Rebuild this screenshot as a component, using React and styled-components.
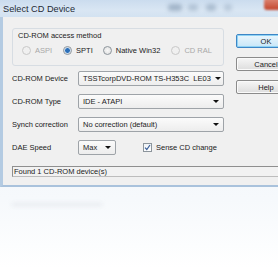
import styled, { createGlobalStyle } from "styled-components";

const GlobalStyle = createGlobalStyle`
  html, body {
    margin: 0;
    padding: 0;
    background: #ffffff;
  }
  body {
    font-family: "Liberation Sans", Arial, sans-serif;
  }
`;

const Screen = styled.div`
  width: 278px;
  height: 268px;
  overflow: hidden;
  position: relative;
  background: linear-gradient(#eaf1f7 0px, #f6f9fc 200px, #ffffff 268px);
`;

const Window = styled.div`
  width: 300px;
  display: flex;
  flex-direction: column;
`;

const TitleBar = styled.div`
  height: 17px;
  position: relative;
  background: linear-gradient(#cbdcee, #d9e6f3 60%, #d3e2f1);
  display: flex;
  align-items: center;
  padding-left: 3px;
  font-family: "Liberation Sans", Arial, sans-serif;
  font-size: 9.2px;
  color: #1e2a36;
`;

const Blob = styled.div`
  position: absolute;
  top: 4px;
  height: 7px;
  border-radius: 3px;
  filter: blur(2px);
  background: ${(p) => p.$color || "#7f95ad"};
  left: ${(p) => p.$left}px;
  width: ${(p) => p.$width}px;
  opacity: ${(p) => p.$opacity || 0.6};
`;

const CloseButton = styled.div`
  position: absolute;
  top: -2px;
  left: 264px;
  width: 30px;
  height: 12px;
  border-radius: 3px;
  background: linear-gradient(#e08a78, #c3452c);
  filter: blur(1px);
`;

const Body = styled.div`
  background: #f0f0f0;
  border-left: 3px solid #b4cbe2;
  border-bottom: 2px solid #a9c2dc;
  padding: 11px 0 0 9px;
  height: 157px;
  font-size: 7.5px;
  color: #1b1b1b;
`;

const Main = styled.div`
  display: flex;
  align-items: flex-start;
`;

const LeftColumn = styled.div`
  width: 212px;
  display: flex;
  flex-direction: column;
`;

const GroupBox = styled.div`
  height: 34px;
  border: 1px solid #d7dde3;
  border-radius: 3px;
  padding: 2px 0 0 5px;
  display: flex;
  flex-direction: column;
`;

const GroupLabel = styled.div`
  line-height: 9px;
`;

const RadioRow = styled.div`
  display: flex;
  align-items: center;
  margin-top: 6px;
  padding-left: 4px;
`;

const RadioItem = styled.label`
  display: flex;
  align-items: center;
  gap: 4px;
  margin-right: ${(p) => p.$gap}px;
  color: ${(p) => (p.$disabled ? "#a8a8a8" : "#1b1b1b")};
`;

const RadioDot = styled.span`
  width: 7px;
  height: 7px;
  border-radius: 50%;
  border: 1px solid ${(p) => (p.$disabled ? "#c8c8c8" : "#8d959c")};
  background: ${(p) =>
    p.$checked
      ? "radial-gradient(circle, #2c6fb8 0 2px, #9dc1e6 2.5px, #f4f4f4 3.5px)"
      : p.$disabled
      ? "#f0f0f0"
      : "radial-gradient(circle, #f8f8f8, #dcdcdc)"};
`;

const Rows = styled.div`
  display: flex;
  flex-direction: column;
  gap: 6px;
  margin-top: 4px;
`;

const Row = styled.div`
  display: flex;
  align-items: center;
  height: 17px;
`;

const Label = styled.div`
  width: 66px;
  flex-shrink: 0;
`;

const Combo = styled.div`
  width: ${(p) => p.$width || 146}px;
  height: 15px;
  box-sizing: border-box;
  border: 1px solid #9ea3a8;
  border-radius: 2px;
  background: linear-gradient(#fbfbfb, #ededed);
  display: flex;
  align-items: center;
  justify-content: space-between;
  padding: 0 4px 0 4px;
  white-space: nowrap;
`;

const Arrow = styled.span`
  width: 0;
  height: 0;
  border-left: 3px solid transparent;
  border-right: 3px solid transparent;
  border-top: 3px solid #111;
  margin-left: 4px;
`;

const CheckItem = styled.label`
  display: flex;
  align-items: center;
  gap: 4px;
  margin-left: 27px;
`;

const CheckBox = styled.span`
  width: 7px;
  height: 7px;
  border: 1px solid #8d959c;
  background: linear-gradient(#eef2f6, #ffffff);
  display: flex;
  align-items: center;
  justify-content: center;
`;

const RightColumn = styled.div`
  display: flex;
  flex-direction: column;
  gap: 9px;
  margin-left: 12px;
  margin-top: 6px;
`;

const Button = styled.div`
  width: 60px;
  height: 14px;
  box-sizing: border-box;
  border-radius: 2px;
  border: 1px solid ${(p) => (p.$default ? "#3d86c6" : "#8b8b8b")};
  background: ${(p) =>
    p.$default
      ? "linear-gradient(#eaf6fd, #c7e6f8)"
      : "linear-gradient(#f6f6f6, #dddddd)"};
  box-shadow: ${(p) => (p.$default ? "inset 0 0 0 1px #8ed2f4" : "inset 0 0 0 1px #fafafa")};
  display: flex;
  align-items: center;
  justify-content: center;
`;

const StatusBar = styled.div`
  margin-top: 10px;
  height: 11px;
  box-sizing: border-box;
  border: 1px solid #bdbdbd;
  border-top-color: #8f8f8f;
  border-left-color: #8f8f8f;
  background: #f2f2f2;
  padding-left: 1px;
  line-height: 9px;
  white-space: nowrap;
`;

const Ghost = styled.div`
  margin: 16px 0 0 12px;
  width: 90px;
  height: 3px;
  background: #e6e9ee;
  filter: blur(2px);
`;

const radios = [
  { label: "ASPI", disabled: true, gap: 11 },
  { label: "SPTI", checked: true, gap: 10 },
  { label: "Native Win32", gap: 11 },
  { label: "CD RAL", disabled: true, gap: 0 },
];

export default function App() {
  return (
    <>
      <GlobalStyle />
      <Screen>
        <Window>
          <TitleBar>
            Select CD Device
            <Blob $left={168} $width={14} />
            <Blob $left={188} $width={10} $opacity={0.4} />
            <Blob $left={206} $width={10} $opacity={0.5} />
            <Blob $left={224} $width={8} $opacity={0.35} />
            <CloseButton />
          </TitleBar>
          <Body>
            <Main>
              <LeftColumn>
                <GroupBox>
                  <GroupLabel>CD-ROM access method</GroupLabel>
                  <RadioRow>
                    {radios.map((r) => (
                      <RadioItem key={r.label} $disabled={r.disabled} $gap={r.gap}>
                        <RadioDot $checked={r.checked} $disabled={r.disabled} />
                        {r.label}
                      </RadioItem>
                    ))}
                  </RadioRow>
                </GroupBox>
                <Rows>
                  <Row>
                    <Label>CD-ROM Device</Label>
                    <Combo>
                      <span>TSSTcorpDVD-ROM TS-H353C&nbsp; LE03</span>
                      <Arrow />
                    </Combo>
                  </Row>
                  <Row>
                    <Label>CD-ROM Type</Label>
                    <Combo>
                      <span>IDE - ATAPI</span>
                      <Arrow />
                    </Combo>
                  </Row>
                  <Row>
                    <Label>Synch correction</Label>
                    <Combo>
                      <span>No correction (default)</span>
                      <Arrow />
                    </Combo>
                  </Row>
                  <Row>
                    <Label>DAE Speed</Label>
                    <Combo $width={38}>
                      <span>Max</span>
                      <Arrow />
                    </Combo>
                    <CheckItem>
                      <CheckBox>
                        <svg width="7" height="7" viewBox="0 0 7 7">
                          <path d="M1 3.6 L2.8 5.5 L6 1" fill="none" stroke="#3a5f9a" strokeWidth="1.2" />
                        </svg>
                      </CheckBox>
                      Sense CD change
                    </CheckItem>
                  </Row>
                </Rows>
              </LeftColumn>
              <RightColumn>
                <Button $default>OK</Button>
                <Button>Cancel</Button>
                <Button>Help</Button>
              </RightColumn>
            </Main>
            <StatusBar>Found 1 CD-ROM device(s)</StatusBar>
          </Body>
          <Ghost />
        </Window>
      </Screen>
    </>
  );
}
